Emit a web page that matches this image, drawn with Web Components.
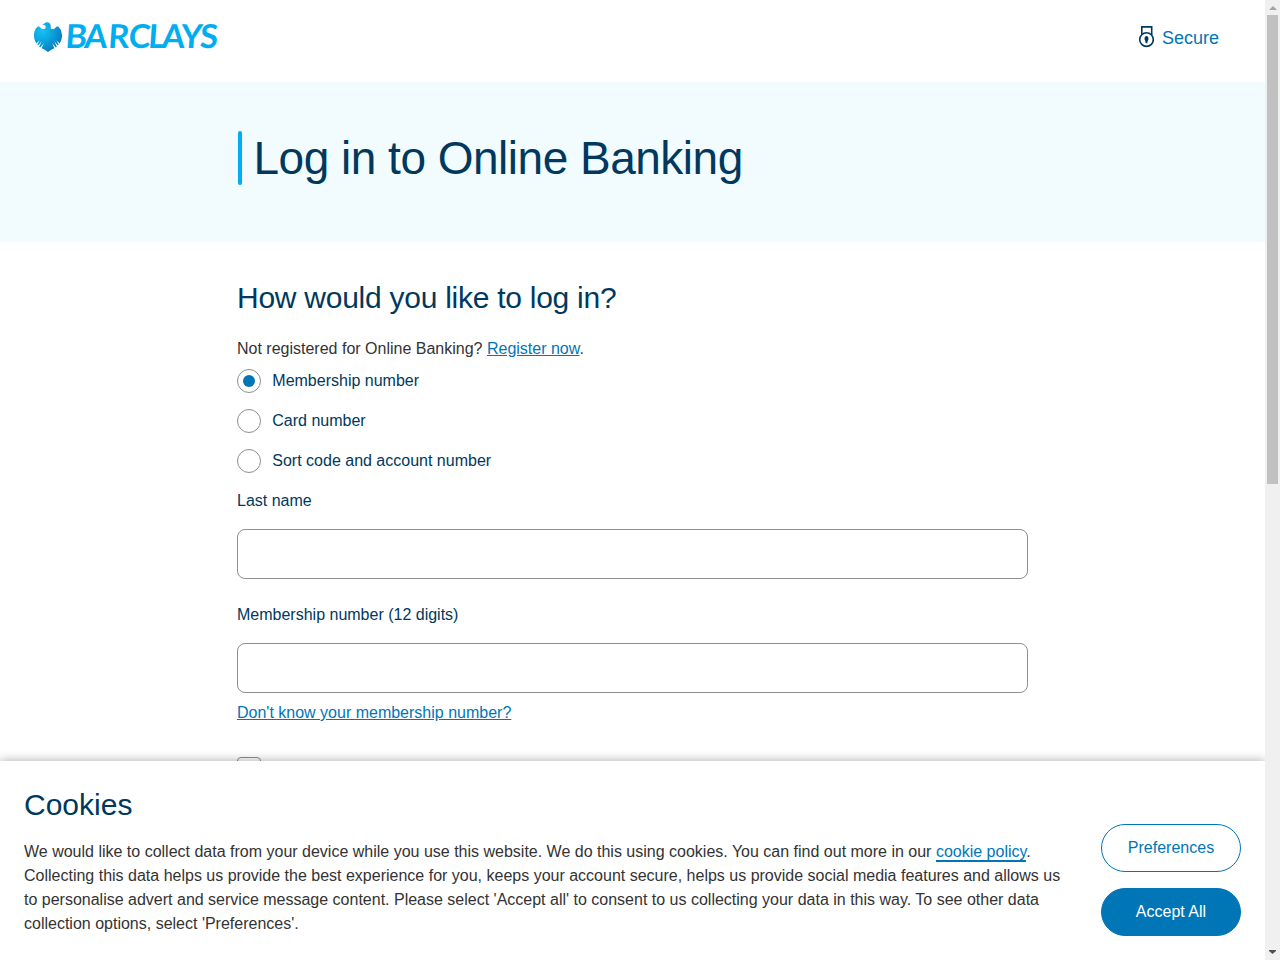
<!DOCTYPE html>
<html lang="en">
<head>
<meta charset="utf-8">
<title>Log in to Online Banking</title>
<style>
html,body{margin:0;height:100%;overflow:hidden;background:#fff}
body{font:16px/24px "Liberation Sans",Arial,sans-serif;color:#333}
</style>
</head>
<body>
<bank-app></bank-app>
<script>
const define = (name, markup) => {
  const template = document.createElement('template');
  template.innerHTML = markup;
  customElements.define(name, class extends HTMLElement {
    constructor() {
      super();
      this.attachShadow({mode: 'open'}).append(template.content.cloneNode(true));
    }
  });
};

define('brand-logo', `
<style>:host{display:block;width:192px;height:52px}svg{display:block}text{font:700 33px Lato,sans-serif;fill:#00aeef}</style>
<svg width="192" height="52" viewBox="0 -10 192 52" role="img" aria-label="Barclays">
<defs><radialGradient id="g" cx="30%" cy="28%" r="80%"><stop offset="0" stop-color="#19c3f5"/><stop offset=".5" stop-color="#0a9fdc"/><stop offset="1" stop-color="#0878b8"/></radialGradient></defs>
<path fill="url(#g)" d="M9 5.2 L11.3 3.4 Q13.8 1.3 16.7 3.2 Q18.4 4.8 17.8 8.7 Q21.2 9.8 22.6 7.5 Q23.8 5.8 25.6 6.8 Q28.6 9.6 29 14.6 Q29.2 20 26.6 23.4 L23.4 20.2 L25.6 24.5 L24.8 25.5 L21.4 21.3 L23.8 26.7 L22.8 27.5 L19.2 23.2 L21.4 28.2 Q18.4 29.4 15 32 Q11.5 29.4 8.6 28.2 L10.8 23.2 L7.2 27.5 L6.2 26.7 L8.6 21.3 L5.2 25.5 L4.4 24.5 L6.6 20.2 L3.4 23.4 Q.8 20 1 14.6 Q1.3 9.6 4.4 6.8 Q6.3 5.8 7.5 7.7 Q8.8 9.8 12 8.8 Q13.2 7 12.4 5.5 Q10.8 4.8 9 5.2Z"/>
<text transform="translate(0 28) skewX(-4)" x="31.8 50.8 74.5 95 114.5 128.3 147.3 166.3" y="0">BARCLAYS</text>
</svg>`);

define('secure-link', `
<style>:host{display:flex;align-items:flex-start;gap:8px;color:#0076b6;font-size:18px;line-height:24px}svg{display:block}span{margin-top:1px}</style>
<svg width="16" height="24" viewBox="0 0 16 24" fill="none" stroke="#00395d" stroke-width="1.6"><path d="M3.8 10V1.9H13.7V10"/><circle cx="8.5" cy="14.6" r="6.8"/><path fill="#00395d" stroke="none" d="M8.5 11C9.7 11 10.5 12.2 10.5 13.8C10.5 15 9.8 15.6 9.6 16.4L9.3 18.2H7.7L7.4 16.4C7.2 15.6 6.5 15 6.5 13.8C6.5 12.2 7.3 11 8.5 11Z"/></svg><span><slot></slot></span>`);

define('site-header', `
<style>:host{display:flex;justify-content:space-between;align-items:flex-start;height:82px;padding:10px 46px 0 33px;box-sizing:border-box}secure-link{margin-top:15px}</style>
<brand-logo></brand-logo><secure-link>Secure</secure-link>`);

define('page-banner', `
<style>:host{display:block;height:160px;padding-top:49px;box-sizing:border-box;background:#f2fbfe}
.row{width:791px;margin-left:238px;display:flex;gap:12px}.bar{width:4px;height:54px;border-radius:2px;background:#00aeef}
h1{margin:0 0 0 -.5px;font-size:46px;line-height:54px;font-weight:400;letter-spacing:-.5px;color:#00395d}</style>
<div class="row"><div class="bar"></div><h1><slot></slot></h1></div>`);

define('radio-option', `
<style>:host{display:flex;align-items:center;height:24px;gap:11.3px;color:#00395d}
i{display:grid;place-items:center;box-sizing:border-box;width:24px;height:24px;border:1px solid #8e8e8e;border-radius:50%;background:#fff}
:host([checked]) i::after{content:"";width:12px;height:12px;border-radius:50%;background:#0076b6}</style>
<i></i><span><slot></slot></span>`);

define('text-field', `
<style>:host{display:block;color:#00395d}label{display:block}
input{display:block;box-sizing:border-box;width:100%;height:50px;margin:16px 0 0;padding:0 16px;border:1px solid #8e8e8e;border-radius:8px;background:#fff;font:inherit;outline:0}</style>
<label><slot></slot><input type="text"></label>`);

define('login-form', `
<style>:host{display:block;width:791px;margin:36px 0 0 237px}
h2{margin:0;font-size:30px;line-height:40px;font-weight:400;letter-spacing:-.26px;color:#00395d}
p{margin:19px 0 8px}a{color:#0076b6}
.options{display:grid;gap:16px;margin-bottom:16px}
text-field+text-field{margin-top:24px;margin-bottom:8px}
.check{width:24px;height:24px;box-sizing:border-box;margin-top:32px;border:1px solid #8e8e8e;border-radius:4px;background:#fff}</style>
<h2>How would you like to log in?</h2>
<p>Not registered for Online Banking? <a href="#">Register now</a>.</p>
<div class="options"><radio-option checked>Membership number</radio-option><radio-option>Card number</radio-option><radio-option>Sort code and account number</radio-option></div>
<text-field>Last name</text-field>
<text-field>Membership number (12 digits)</text-field>
<a href="#">Don't know your membership number?</a>
<div class="check"></div>`);

define('pill-button', `
<style>:host{display:block}button{display:block;width:140px;height:48px;padding:0;border:1px solid #0076b6;border-radius:24px;background:#fff;color:#0076b6;font:inherit}
:host([primary]) button{background:#0076b6;color:#fff}</style><button><slot></slot></button>`);

define('cookie-notice', `
<style>:host{display:flex;justify-content:space-between;align-items:flex-end;box-sizing:border-box;height:199px;padding:24px;background:#fff;box-shadow:0 0 10px rgba(0,0,0,.35)}
.copy{width:1040px;align-self:flex-start}h2{margin:0 0 15px;font-size:30px;line-height:40px;font-weight:400;color:#00395d}p{margin:0}
a{color:#0076b6;text-decoration:none;border-bottom:2px solid #0076b6}
.actions{display:grid;gap:16px}</style>
<div class="copy"><h2>Cookies</h2><p>We would like to collect data from your device while you use this website. We do this using cookies. You can find out more in our <a href="#">cookie policy</a>. Collecting this data helps us provide the best experience for you, keeps your account secure, helps us provide social media features and allows us to personalise advert and service message content. Please select 'Accept all' to consent to us collecting your data in this way. To see other data collection options, select 'Preferences'.</p></div>
<div class="actions"><pill-button>Preferences</pill-button><pill-button primary>Accept All</pill-button></div>`);

define('page-scrollbar', `
<style>:host{display:flex;flex-direction:column;align-items:center;width:15px;height:100%;background:#f0f0f0}
svg{display:block;flex:none}.track{flex:1}.thumb{width:11px;height:469px;background:#c1c1c1}</style>
<svg width="15" height="15"><path d="M4 10h8l-4-4z" fill="#a3a3a3"/></svg>
<div class="track"><div class="thumb"></div></div>
<svg width="15" height="15"><path d="M4 5h7v1l-3.5 3L4 6z" fill="#505050"/></svg>`);

define('bank-app', `
<style>:host{display:grid;grid-template-columns:1fr 15px;height:100vh}
.page{position:relative;overflow:hidden}cookie-notice{position:absolute;left:0;right:0;bottom:0}</style>
<div class="page"><site-header></site-header><page-banner>Log in to Online Banking</page-banner><login-form></login-form><cookie-notice></cookie-notice></div>
<page-scrollbar></page-scrollbar>`);
</script>
</body>
</html>
